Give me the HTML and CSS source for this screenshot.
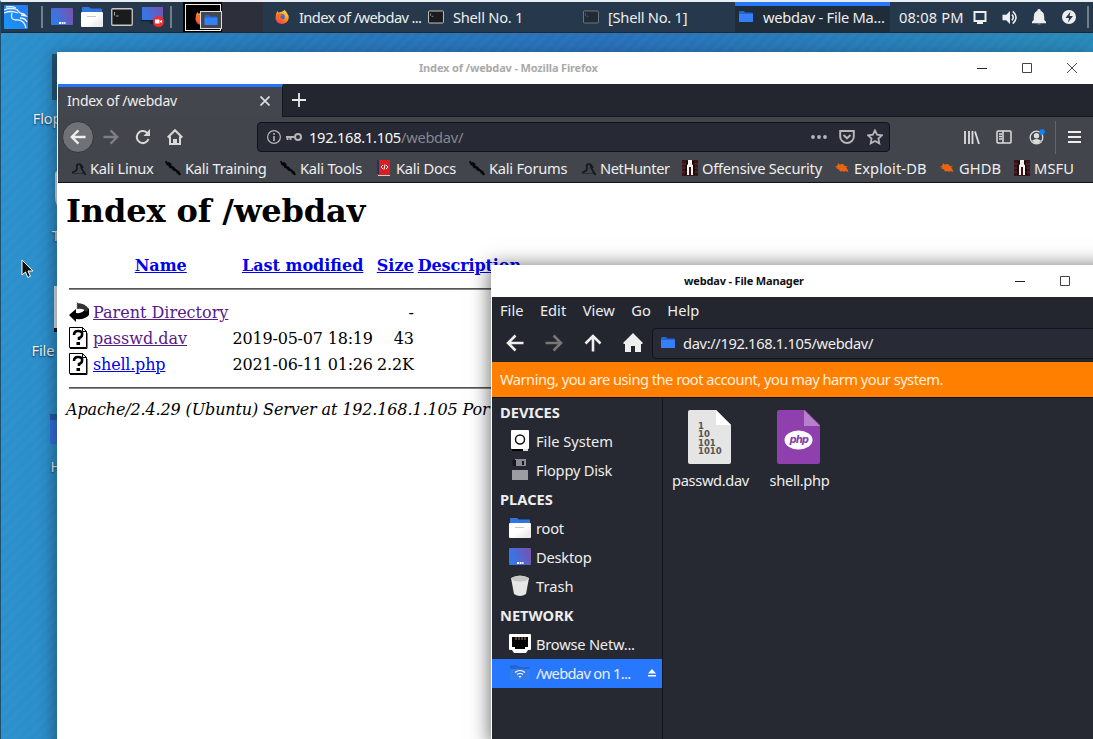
FILE: index.html
```html
<!DOCTYPE html>
<html lang="en">
<head>
<meta charset="utf-8">
<title>Desktop</title>
<link rel="stylesheet" href="styles.css">
</head>
<body>
<svg class="defs" aria-hidden="true">
  <defs>
    <linearGradient id="desk" x1="0" y1="0.3" x2="1" y2="0"><stop offset="0" stop-color="#3478e6"/><stop offset="1" stop-color="#7c50ad"/></linearGradient>
    <linearGradient id="kali" x1="0" y1="1" x2="1" y2="0"><stop offset="0" stop-color="#1996f5"/><stop offset="1" stop-color="#2878f7"/></linearGradient>
    <linearGradient id="fox" x1="0.8" y1="0" x2="0.2" y2="1"><stop offset="0" stop-color="#ffe14b"/><stop offset=".5" stop-color="#ff8a20"/><stop offset="1" stop-color="#f43354"/></linearGradient>
    <linearGradient id="paper" x1="0" y1="0" x2="1" y2="1"><stop offset=".5" stop-color="#fff"/><stop offset=".8" stop-color="#ececec"/></linearGradient>
  </defs>
  <symbol id="i-desktop" viewBox="0 0 22 18"><rect width="22" height="17" rx="1" fill="url(#desk)"/><path d="M8 14h2v2H8zm2.700 0h1.800v2h-1.800zm2.500 0h1.300v2h-1.300z" fill="#fff"/></symbol>
  <symbol id="i-folder" viewBox="0 0 22 20"><path d="M1 1q0-1 1-1h6l2 1.500h10q1 0 1 1V8H1z" fill="#2f74e0"/><rect y="5" width="22" height="15" rx="1" fill="url(#paper)"/><path d="M6 9.500h9" stroke="#c9c9c9"/></symbol>
  <symbol id="i-bluefolder" viewBox="0 0 14 12"><path d="M0 1q0-1 1-1h4l1 1.500h7q1 0 1 1V11H0z" fill="#2166d4"/><path d="M0 3h14v7q0 1-1 1H1q-1 0-1-1z" fill="#3580f4"/></symbol>
  <symbol id="i-term" viewBox="0 0 22 18"><rect x=".75" y=".75" width="20.500" height="16.500" rx="1" fill="#1a1b1d" stroke="#ccc8c2" stroke-width="1.300"/><path d="M3.500 4v3.500M5 8h2.500" stroke="#aaa" fill="none"/></symbol>
  <symbol id="i-fox" viewBox="0 0 16 16"><path d="M1 6Q1 3 3 1l1 2q2-1 4-1l3-2q2 2 3 4 2 2 1.500 6-1 5-7 6Q2 16 .5 10z" fill="url(#fox)"/><circle cx="7.500" cy="8" r="3.600" fill="#3769da"/><path d="M2 5q3-2 5 0 2 0 2 1-2 0-3 2 1 3 5 2-4 4-8 0Q1 8 2 5" fill="#ff6729"/></symbol>
  <symbol id="b-dragon" viewBox="0 0 16 16"><path d="M2 12.500q5-1 5-4.500-1-4 2-4 2 0 4 4M10 4q1 2 1.500 4.500L15 14l-3-1" fill="none" stroke="#15181c" stroke-width="1.700"/><path d="M2 13.500h12" stroke="#2b2e33"/></symbol>
  <symbol id="b-knife" viewBox="0 0 16 16"><path d="M0 1h1.500l1 1.500L4 2l2.500 2v2l2 .5L11 9l4 3v1l1 1-1 1.500-3-2-1-2-3-1-1.500-2-2-.5-1-2-2-1z" fill="#050607"/></symbol>
  <symbol id="b-offsec" viewBox="0 0 16 16"><path d="M0 0h16v16H0z" fill="#351317"/><path d="M0 4h5m6 0h5M0 8h4m8 0h4M0 12h5m6 0h5" stroke="#5d3034"/><path d="M6 0h4v4l1 1v10H9V7H7v8H5V5l1-1z" fill="#f5efee"/><path d="M5 1v3L4 6v9m7-14v4l1 1v9" stroke="#000" fill="none"/></symbol>
  <symbol id="b-bug" viewBox="0 0 16 16"><path d="M1 7l2.500-1.500L4 3l1.500 1.500L9 4l2 2 3 .5-2 1 1 1 1.500 3.500-3-1-1.500 1-1-1-3 .5-1-2-3-1 2-.5z" fill="#ec640e"/></symbol>
  <symbol id="win-min" viewBox="0 0 10 10"><path d="M0 5.500h10" stroke="#222"/></symbol>
  <symbol id="win-max" viewBox="0 0 10 10"><path d="M.5.5h9v9h-9z" fill="none" stroke="#444"/></symbol>
  <symbol id="arrow" viewBox="0 0 18 18"><path d="M17.500 9H2M9.500 1.500L2 9l7.500 7.500" fill="none" stroke="currentColor" stroke-width="2.600"/></symbol>
  <symbol id="unknown" viewBox="0 0 20 22"><path d="M.5.500h13l4 4v16H.5z" fill="#fff" stroke="#000"/><path d="M13.500.500v4h4M1 21.500h17V6" fill="none" stroke="#000"/><path d="M5 8q0-4 4-4 5 0 4 4 0 2-3 3v2" fill="none" stroke="#000" stroke-width="2.600"/><path d="M7.500 15h3.500v3H7.500z"/></symbol>
</svg>

<div class="desktop">
  <header class="panel">
    <div class="launchers">
      <svg class="kali" viewBox="0 0 24 24"><rect width="24" height="24" rx="1" fill="url(#kali)"/><path d="M0 5q7-3 14 0M0 8q7-3 14 0M2 2q6-1 10 1M8 8q-2 7 4 7 8-1 10 8M13 5l3 3 4 1 2 2-5-1M16 13q5 0 7 4" fill="none" stroke="#eaf4ff" stroke-width="1.300"/></svg>
      <i class="sep"></i>
      <svg class="l1"><use href="#i-desktop"/></svg>
      <svg class="l2"><use href="#i-folder"/></svg>
      <svg class="l3"><use href="#i-term"/></svg>
      <svg class="l4" viewBox="0 0 24 20"><rect x="1" width="21" height="13" fill="url(#desk)"/><path d="M0 13h22v1.500H0zM9 14h4v3H9z" fill="#18202d"/><circle cx="17.500" cy="14.500" r="5.500" fill="#ee2e31"/><path d="M14 12.500h4.500v4H14zM19 14l2-1v3l-2-1z" fill="#fff"/></svg>
      <i class="sep s2"></i>
    </div>
    <div class="pager"><div class="mini-fx"><svg><use href="#i-fox"/></svg></div><div class="mini-fm"><svg><use href="#i-bluefolder"/></svg></div></div>
    <nav class="tasks">
      <div class="task"><svg><use href="#i-fox"/></svg><span>Index of /webdav ...</span></div>
      <div class="task t2"><svg><use href="#i-term"/></svg><span>Shell No. 1</span></div>
      <div class="task t3"><svg><use href="#i-term"/></svg><span>[Shell No. 1]</span></div>
      <div class="task active"><svg><use href="#i-bluefolder"/></svg><span>webdav - File Ma...</span></div>
    </nav>
    <div class="tray"><span class="clock">08:08 PM</span>
      <svg viewBox="0 0 14 14"><path d="M1.500 2h11v9h-11zM4 13h6" fill="none" stroke="#eee" stroke-width="2"/></svg>
      <svg class="wide" viewBox="0 0 16 16"><path d="M0 5h4l4-4v14l-4-4H0z" fill="#eee"/><path d="M10 5q3 3 0 6M11 1.500q7 6.500 0 13" fill="none" stroke="#eee" stroke-width="1.700"/></svg>
      <svg class="bell" viewBox="0 0 14 16"><path d="M7 0q1.500 0 1.500 2Q12 3 12 8v3l2 2v1H0v-1l2-2V8q0-5 3.500-6Q5.500 0 7 0M5.500 15h3" fill="#eee" stroke="#eee" stroke-width=".5"/></svg>
      <svg viewBox="0 0 14 14"><circle cx="7" cy="7" r="7" fill="#eee"/><path d="M8.500 1.500L3.500 8H7l-1 4.500L11 6H7.500z" fill="#25384b"/></svg>
      <i class="sep"></i>
    </div>
  </header>

  <div class="shortcut floppy"><i></i><span>Floppy Disk</span></div>
  <div class="shortcut trash"><i></i><span>Trash</span></div>
  <div class="shortcut fs"><i></i><span>File System</span></div>
  <div class="shortcut home"><i></i><span>Home</span></div>

  <section class="window firefox">
    <div class="titlebar"><span>Index of /webdav - Mozilla Firefox</span>
      <svg><use href="#win-min"/></svg><svg><use href="#win-max"/></svg><svg viewBox="0 0 10 10"><path d="M0 0l10 10M10 0L0 10" stroke="#333" stroke-width=".9"/></svg>
    </div>
    <div class="tabs"><div class="tab"><span>Index of /webdav</span><svg viewBox="0 0 10 10"><path d="M.5.5l9 9m0-9l-9 9" stroke="#ddd" stroke-width="1.700"/></svg></div>
      <svg class="plus" viewBox="0 0 14 14"><path d="M7 0v14M0 7h14" stroke="#e8e8e8" stroke-width="1.800"/></svg></div>
    <div class="navbar">
      <div class="back"><svg><use href="#arrow"/></svg></div>
      <svg class="fwd"><use href="#arrow"/></svg>
      <svg class="reload" viewBox="0 0 16 16"><path d="M13.500 10A6 6 0 1 1 12 3.800" fill="none" stroke="#d8d8d8" stroke-width="2"/><path d="M15 0v7H8.500z" fill="#d8d8d8"/></svg>
      <svg class="home-icon" viewBox="0 0 16 16"><path d="M.7 8.500L8 1.200l7.300 7.300M3 7.500V15h10V7.500M7 15v-4h2v4" fill="none" stroke="#d8d8d8" stroke-width="2"/></svg>
      <div class="url">
        <svg class="info" viewBox="0 0 14 14"><circle cx="7" cy="7" r="6.400" fill="none" stroke="#b5b6ba" stroke-width="1.200"/><path d="M7 6v5M7 3v1.800" stroke="#b5b6ba" stroke-width="1.600"/></svg>
        <svg class="key" viewBox="0 0 16 10"><path d="M8 5H0M1.500 5v3M4.500 5v3" stroke="#b5b6ba" stroke-width="2" fill="none"/><circle cx="12" cy="5" r="3" fill="none" stroke="#b5b6ba" stroke-width="2"/></svg>
        <span class="host">192.168.1.105<em>/webdav/</em></span>
        <svg class="dots" viewBox="0 0 16 4"><circle cx="2" cy="2" r="1.900" fill="#b5b6ba"/><circle cx="8" cy="2" r="1.900" fill="#b5b6ba"/><circle cx="14" cy="2" r="1.900" fill="#b5b6ba"/></svg>
        <svg viewBox="0 0 16 16"><path d="M1.200 2h13.600v5.500a6.800 6.500 0 0 1-13.600 0zM4.500 6L8 9.300 11.500 6" fill="none" stroke="#b5b6ba" stroke-width="2"/></svg>
        <svg viewBox="0 0 16 16"><path d="M8 1.300l2.100 4.400 4.800.6-3.500 3.300.9 4.800L8 12l-4.300 2.400.9-4.800L1.100 6.300l4.800-.6z" fill="none" stroke="#b5b6ba" stroke-width="1.800"/></svg>
      </div>
      <svg class="lib" viewBox="0 0 16 14"><path d="M1 1v13M5 1v13M8.500 1v13M11 1.500L15 14" fill="none" stroke="#ddd" stroke-width="1.800"/></svg>
      <svg class="side" viewBox="0 0 16 14"><path d="M1 2q0-1 1-1h12q1 0 1 1v10q0 1-1 1H2q-1 0-1-1zM7 1v12M3 4h3M3 6.500h3M3 9h3" fill="none" stroke="#ddd" stroke-width="1.500"/></svg>
      <svg class="account" viewBox="0 0 16 16"><circle cx="7.500" cy="8.500" r="6.300" fill="none" stroke="#ddd" stroke-width="1.300"/><circle cx="7.500" cy="6.700" r="2.700" fill="#ddd"/><path d="M3 11.500q4.500-3 9 0-2 3-4.500 3T3 11.500" fill="#ddd"/><circle cx="13" cy="3" r="2.800" fill="#0a84ff"/></svg>
      <i class="bar"></i>
      <svg class="burger" viewBox="0 0 13 12"><path d="M0 1h13M0 6h13M0 11h13" stroke="#eee" stroke-width="2"/></svg>
    </div>
    <div class="bookmarks">
      <div><svg><use href="#b-dragon"/></svg><span>Kali Linux</span></div>
      <div><svg><use href="#b-knife"/></svg><span>Kali Training</span></div>
      <div><svg><use href="#b-knife"/></svg><span>Kali Tools</span></div>
      <div><svg viewBox="0 0 16 16"><path d="M1 0h13v15H1z" fill="#da1d20"/><path d="M1 0h2v14H1z" fill="#20335b"/><path d="M2 15.500h12" stroke="#ccc"/><path d="M7 5L5 7l2 2m3-4l2 2-2 2M9 4.500L8 9.500" fill="none" stroke="#fff"/></svg><span>Kali Docs</span></div>
      <div><svg><use href="#b-knife"/></svg><span>Kali Forums</span></div>
      <div><svg><use href="#b-dragon"/></svg><span class="tight">NetHunter</span></div>
      <div><svg><use href="#b-offsec"/></svg><span>Offensive Security</span></div>
      <div><svg><use href="#b-bug"/></svg><span class="loose">Exploit-DB</span></div>
      <div><svg><use href="#b-bug"/></svg><span class="loose">GHDB</span></div>
      <div><svg><use href="#b-offsec"/></svg><span class="loose">MSFU</span></div>
    </div>
    <main class="listing">
      <h1>Index of /webdav</h1>
      <table>
        <tr class="head"><th></th><th><a>Name</a></th><th><a>Last modified</a></th><th><a>Size</a></th><th><a>Description</a></th></tr>
        <tr><td colspan="5"><hr class="top"></td></tr>
        <tr><td><svg viewBox="0 0 20 22"><path d="M0 14l7-6v4q7 1 10-5l3 1v6q-4 5-13 4v3z"/><path d="M8 2q8 0 12 6l-3 3q-2-4-9-3z" fill="#333"/><path d="M8 1v8" stroke="#888" stroke-dasharray="1 1"/></svg></td><td><a class="seen">Parent Directory</a></td><td></td><td class="r">-</td><td></td></tr>
        <tr><td><svg><use href="#unknown"/></svg></td><td><a class="seen">passwd.dav</a></td><td class="r">2019-05-07 18:19</td><td class="r">43</td><td></td></tr>
        <tr><td><svg><use href="#unknown"/></svg></td><td><a class="new">shell.php</a></td><td class="r">2021-06-11 01:26</td><td class="r">2.2K</td><td></td></tr>
        <tr><td colspan="5"><hr class="bottom"></td></tr>
      </table>
      <address>Apache/2.4.29 (Ubuntu) Server at 192.168.1.105 Por</address>
    </main>
  </section>

  <section class="window files">
    <div class="titlebar"><span>webdav - File Manager</span><svg><use href="#win-min"/></svg><svg><use href="#win-max"/></svg></div>
    <nav class="menu"><span>File</span><span>Edit</span><span>View</span><span>Go</span><span>Help</span></nav>
    <div class="tools">
      <svg><use href="#arrow"/></svg><svg class="next"><use href="#arrow"/></svg><svg class="up"><use href="#arrow"/></svg>
      <svg class="house" viewBox="0 0 20 20"><path d="M10 0l10 10-1 1h-1v8h-6v-6H8v6H2v-8H1l-1-1z" fill="#eee"/></svg>
      <div class="path"><svg><use href="#i-bluefolder"/></svg><span>dav://192.168.1.105/webdav/</span></div>
    </div>
    <div class="warning"><span>Warning, you are using the root account, you may harm your system.</span></div>
    <div class="body">
      <aside>
        <h2>DEVICES</h2>
        <div class="row"><svg viewBox="0 0 22 22"><rect x="2" y="0" width="18" height="19" rx="1" fill="#fff"/><path d="M3 20h16" stroke="#ddd" stroke-width="2"/><path d="M3 20h11" stroke="#000" stroke-width="2"/><circle cx="11" cy="9.500" r="4.500" fill="none" stroke="#111" stroke-width="1.500"/></svg><span class="wide">File System</span></div>
        <div class="row"><svg viewBox="0 0 22 22"><path d="M2 0h16l2 2v19H2z" fill="#252832"/><path d="M6 0h11v7H6z" fill="#8b8c91"/><path d="M3 1h4v6H4zm10 1h2v4h-2z" fill="#14171d"/><path d="M3 11h16v10H3z" fill="#9c9da2"/></svg><span>Floppy Disk</span></div>
        <h2>PLACES</h2>
        <div class="row"><svg><use href="#i-folder"/></svg><span>root</span></div>
        <div class="row"><svg><use href="#i-desktop"/></svg><span>Desktop</span></div>
        <div class="row"><svg viewBox="0 0 22 22"><path d="M2 3q9-5 18 0l-3 16q-6 4-12 0z" fill="#e6e6e6"/><ellipse cx="11" cy="3.800" rx="8.300" ry="2.800" fill="#c5c5c5"/></svg><span class="wide">Trash</span></div>
        <h2>NETWORK</h2>
        <div class="row"><svg viewBox="0 0 22 22"><path d="M1 1h20q1 0 1 1v14q0 1-1 1h-2l-2 3H5l-2-3H1q-1 0-1-1V2q0-1 1-1" fill="#fff"/><path d="M3 4h16v10h-3v2H6v-2H3z"/><path d="M7 4v3m3-3v3m3-3v3m3-3v3" stroke="#9b8657"/></svg><span>Browse Netw...</span></div>
        <div class="row selected"><svg viewBox="0 0 22 22"><path d="M1 4q0-1 1-1h6l2 2h10q1 0 1 1v12H1z" fill="#2466d8"/><path d="M1 7h20v11H1z" fill="#347ce8"/><path d="M6 10.500q5-4 10 0M8 12.500q3-2 6 0" fill="none" stroke="#fff" stroke-width="1.100"/><path d="M9.500 14h3L11 16z" fill="#fff"/></svg><span>/webdav on 1...</span><svg class="eject" viewBox="0 0 8 8"><path d="M4 0l4 4.500H0zM0 6h8v1.500H0z" fill="#fff"/></svg></div>
      </aside>
      <div class="grid">
        <figure><svg viewBox="0 0 43 54"><path d="M2 0h26l15 15v37q0 2-2 2H2q-2 0-2-2V2q0-2 2-2" fill="#e5e5e5"/><path d="M28 0l15 15H28z" fill="#fff"/><text class="bits" x="10" y="19">1</text><text class="bits" x="10" y="27">10</text><text class="bits" x="10" y="36">101</text><text class="bits" x="10" y="44">1010</text></svg><figcaption>passwd.dav</figcaption></figure>
        <figure><svg viewBox="0 0 43 54"><path d="M2 0h26l15 15v37q0 2-2 2H2q-2 0-2-2V2q0-2 2-2" fill="#8f3fae"/><path d="M27 0l16 16H27z" fill="#b681ca"/><ellipse cx="21.500" cy="30" rx="14" ry="9.500" fill="#fff"/><text class="php" x="12.500" y="33">php</text></svg><figcaption>shell.php</figcaption></figure>
      </div>
    </div>
  </section>

  <svg class="cursor" viewBox="0 0 14 20"><path d="M1 1v15l3.500-3 2.300 5.500 2.600-1.200L7 12h5z" fill="#111" stroke="#fff"/></svg>
</div>
</body>
</html>
```
FILE: styles.css
```css
* { box-sizing: border-box; }
body { margin: 0; font: 14.67px/20px "Noto Sans", sans-serif; color: #eee; }
svg { display: block; flex: none; }
span { white-space: nowrap; }
.defs { position: absolute; width: 0; height: 0; }
.desktop {
  position: relative; width: 1093px; height: 739px; overflow: hidden;
  border-left: 1px solid #20506d; border-top: 2px solid #e9eef3;
  background: repeating-linear-gradient(135deg, #ffffff05 0 4px, #0000 4px 8px), linear-gradient(90deg, #2b91cc, #2778b9 25%, #2870b9 55%, #2889b9);
}

/* Top panel */
.panel { display: flex; height: 31px; background: #26394c; border-bottom: 1px solid #202833; }
.launchers { display: flex; align-items: center; width: 182px; padding-left: 3px; }
.kali { width: 24px; height: 24px; }
.sep { width: 2px; height: 22px; background: #737e89; margin-left: 13px; }
.l1 { width: 22px; height: 18px; margin-left: 8px; }
.l2 { width: 22px; height: 20px; margin-left: 8px; }
.l3 { width: 22px; height: 18px; margin-left: 8px; }
.l4 { width: 24px; height: 20px; margin-left: 8px; }
.s2 { margin-left: 5px; }
.pager { position: relative; width: 80px; background: linear-gradient(90deg, #000 39px, #2d303b 39px); }
.mini-fx { width: 36px; height: 27px; margin: 2px; border: 1px solid #eee; padding: 6px 9px; background: #000; }
.mini-fx svg { width: 14px; height: 14px; }
.mini-fm { position: absolute; left: 17px; top: 9px; width: 22px; height: 18px; border: 1px solid #ddd; background: #45474a; padding: 3px; }
.mini-fm svg { width: 14px; height: 11px; }
.tasks { display: grid; grid-template-columns: 158px 157px 157px 155px; letter-spacing: -.25px; }
.task { display: flex; align-items: center; padding-left: 11px; }
.task svg { width: 16px; height: 14px; margin-right: 9px; }
.task:first-child span { letter-spacing: -.62px; }
.t2 { padding-left: 7px; }
.t3 { padding-left: 5px; }
.t3 svg { opacity: .45; }
.task.active { padding-left: 4px; background: #1f2d3a; border-top: 4px solid #2777ff; padding-bottom: 4px; }
.task.active svg { width: 14px; height: 12px; margin-right: 10px; }
.tray { display: flex; align-items: center; padding-left: 9px; }
.clock { width: 74px; letter-spacing: .15px; }
.tray svg { width: 14px; height: 14px; margin-right: 15px; }
.tray .wide { width: 16px; height: 15px; margin: 0 14px 0 0; }
.tray .bell { height: 16px; margin-right: 16px; }
.tray .sep { margin-left: -4px; }

/* Desktop icons */
.shortcut { position: absolute; width: 96px; left: 23px; text-align: center; letter-spacing: -.2px; text-shadow: 0 1px 2px #124; }
.shortcut i { display: block; position: relative; left: 5px; width: 48px; height: 46px; margin: 0 auto 8px; background: #23546f; }
.floppy { top: 52px; left: 22px; }
.trash { top: 169px; left: 21px; }
.trash i { background: #dce3e7; border-radius: 3px 3px 20px 20px; left: 8px; width: 46px; }
.fs { top: 284px; left: 20px; }
.fs i { left: 9px; background: linear-gradient(#e7e9ee 42px, #111 42px); }
.home { top: 400px; left: 22px; }
.home i { background: linear-gradient(#2453ad 6px, #326edb 6px); width: 52px; height: 30px; top: 12px; left: 5px; margin-bottom: 24px; }

/* Windows */
.window { position: absolute; width: 1036px; }
.firefox { left: 56px; top: 50px; height: 700px; background: #fff; border-left: 1px solid #fff; box-shadow: -3px 3px 14px #1237; }
.titlebar { display: flex; align-items: center; height: 32px; background: #fff; color: #aaa; }
.titlebar span { flex: none; font-size: 11px; font-weight: 700; letter-spacing: -.25px; }
.firefox .titlebar span { width: 919px; padding-left: 361px; letter-spacing: -.16px; }
.titlebar svg { width: 10px; height: 10px; margin-right: 35px; }
.tabs { display: flex; align-items: center; height: 33px; background: #23262f; border-bottom: 1px solid #14161c; }
.tab { display: flex; align-items: center; width: 225px; height: 33px; align-self: flex-start; background: #44464d; border-top: 3px solid #2575f5; border-right: 1px solid #15171d; padding: 0 0 2px 9px; letter-spacing: -.25px; font-size: 14px; }
.tab span { width: 193px; }
.tab svg { width: 10px; height: 10px; }
.plus { width: 14px; height: 14px; margin-left: 9px; }
.navbar { display: flex; align-items: center; height: 40px; background: #43454c; }
.back { width: 32px; height: 32px; margin-left: 4px; padding: 7px; border-radius: 50%; background: #707176; border: 1px solid #33353a; color: #eee; }
.back svg { width: 16px; height: 16px; }
.fwd { width: 16px; height: 16px; margin-left: 9px; color: #7d7f84; transform: scaleX(-1); }
.reload { width: 16px; height: 16px; margin-left: 16px; }
.home-icon { width: 16px; height: 16px; margin-left: 16px; }
.url { display: flex; align-items: center; width: 633px; height: 30px; margin-left: 74px; padding-left: 9px; background: #272934; border: 1px solid #101218; border-radius: 4px; }
.info { width: 14px; height: 14px; }
.key { width: 16px; height: 10px; margin: 0 7px 0 5px; }
.host { flex: none; width: 502px; color: #f8f8f8; letter-spacing: -.28px; }
.host em { font-style: normal; color: #85878e; }
.url svg { margin-right: 12px; }
.url svg:not([class]) { width: 16px; height: 16px; }
.url svg.info { margin-right: 0; }
.url svg.key { margin-right: 7px; }
.dots { width: 16px; height: 4px; }
.lib { width: 16px; height: 14px; margin-left: 74px; }
.side { width: 16px; height: 14px; margin-left: 16px; }
.account { width: 16px; height: 16px; margin-left: 17px; }
.bar { width: 1px; height: 33px; margin-left: 10px; background: #63656b; }
.burger { width: 13px; height: 12px; margin-left: 12px; }
.bookmarks { display: grid; grid-template-columns: 95px 115px 96px 93px 111px 102px 152px 105px 75px 80px; height: 26px; padding-left: 14px; background: #43454c; border-bottom: 1px solid #101218; overflow: hidden; letter-spacing: -.24px; }
.bookmarks div { display: flex; align-items: center; gap: 4px; height: 22px; margin-left: -2px; }
.bookmarks svg { width: 16px; height: 16px; }
.bookmarks .tight { letter-spacing: -.4px; }
.bookmarks .loose { letter-spacing: .1px; }

/* Directory listing */
.listing { padding: 10px 8px; font: 16px "DejaVu Serif", serif; color: #000; }
.listing h1 { margin: 0 0 23px; font-size: 32px; line-height: 37px; letter-spacing: -.12px; }
.listing table { width: 458px; }
.listing td, .listing th { padding: 1px; vertical-align: top; white-space: nowrap; }
.listing td { height: 22px; }
.listing svg { width: 20px; height: 22px; margin: -2px 0 2px; }
.listing .r { text-align: right; letter-spacing: -.2px; }
.listing a { color: #00e; text-decoration: underline; }
.listing .seen { color: #551a8b; }
.listing .new { letter-spacing: -.2px; }
.listing hr { margin: 8px 0; border: 0; height: 2px; background: linear-gradient(#555 1px, #888 1px); }
.listing hr.top { margin: 9px 0; }
.listing hr.bottom { margin-top: 6px; }
.listing th:last-child { letter-spacing: -.1px; }
.listing address { margin-top: -4px; white-space: nowrap; letter-spacing: -.13px; }

/* File manager */
.files { left: 490px; top: 263px; height: 480px; background: #262932; border-left: 1px solid #fff; box-shadow: -2px 0 18px #0008; }
.files .titlebar { color: #111; }
.files .titlebar span { width: 523px; padding-left: 192px; letter-spacing: -.16px; }
.menu { display: flex; height: 27px; padding: 3px 8px; gap: 16.500px; background: #23262e; }
.tools { display: flex; align-items: center; height: 38px; padding-left: 14px; background: #23262e; }
.tools > svg { width: 18px; height: 18px; margin-right: 21px; }
.tools .next { transform: scaleX(-1); color: #777; }
.tools .up { transform: rotate(90deg); }
.tools .house { width: 20px; height: 20px; margin: 0 9px 0 0; }
.path { display: flex; align-items: center; width: 450px; height: 31px; padding-left: 8px; background: #282b35; border: 1px solid #12141a; border-radius: 4px; letter-spacing: -.35px; }
.path svg { width: 14px; height: 12px; margin-right: 8px; }
.warning { height: 36px; padding: 7px 8px; background: #ff7f00; border-bottom: 1px solid #14161b; color: #fff0df; letter-spacing: -.5px; }
.body { display: flex; height: 345px; }
.files aside { width: 171px; border-right: 1px solid #14161b; }
.files h2 { margin: 0; padding-left: 8px; font-size: 14.67px; line-height: 28px; height: 29px; }
.row { display: flex; align-items: center; height: 29px; padding: 0 0 2px 17px; gap: 5px; letter-spacing: -.22px; }
.row svg { width: 22px; height: 22px; }
.row span { min-width: 99px; }
.row .wide { letter-spacing: 0; }
.selected { background: #2777ff; }
.selected span { letter-spacing: -.68px; }
.row .eject { width: 8px; height: 8px; margin-left: 8px; }
.grid { display: flex; padding: 12px 3px; }
figure { width: 89px; margin: 0; text-align: center; letter-spacing: -.35px; }
figure svg { width: 43px; height: 54px; margin: 0 auto 6px 22px; }
.bits { font: 700 8.500px "DejaVu Sans", sans-serif; letter-spacing: 0; fill: #555; }
.php { font: italic 700 10px "DejaVu Sans", sans-serif; letter-spacing: -1px; fill: #873fa7; }
.cursor { position: absolute; left: 20px; top: 257px; width: 14px; height: 20px; }
```
